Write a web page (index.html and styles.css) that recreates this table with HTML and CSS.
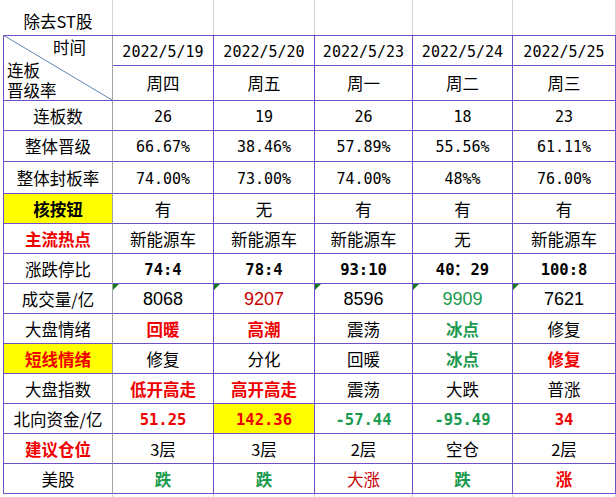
FILE: index.html
```html
<!DOCTYPE html>
<html lang="zh-CN">
<head>
<meta charset="utf-8">
<title>连板晋级率</title>
<link rel="stylesheet" href="styles.css">
</head>
<body>
<div class="sheet">
  <div class="toprow">
    <div class="tc cn">除去ST股</div><div class="tc"></div><div class="tc"></div><div class="tc"></div><div class="tc"></div><div class="tc"></div>
  </div>
  <div class="grid">
    <div class="c corner">
      <svg class="diag" viewBox="0 0 100 100" preserveAspectRatio="none"><line x1="0" y1="0" x2="100" y2="100" stroke="#5f82b2" stroke-width="1" vector-effect="non-scaling-stroke"/></svg>
      <span class="k-time">时间</span>
      <span class="k-l1">连板</span>
      <span class="k-l2">晋级率</span>
    </div>
    <div class="c num">2022/5/19</div><div class="c num">2022/5/20</div><div class="c num">2022/5/23</div><div class="c num">2022/5/24</div><div class="c num">2022/5/25</div>
    <div class="c cn">周四</div><div class="c cn">周五</div><div class="c cn">周一</div><div class="c cn">周二</div><div class="c cn">周三</div>

    <div class="c cn lab">连板数</div><div class="c num">26</div><div class="c num">19</div><div class="c num">26</div><div class="c num">18</div><div class="c num">23</div>
    <div class="c cn lab">整体晋级</div><div class="c num">66.67%</div><div class="c num">38.46%</div><div class="c num">57.89%</div><div class="c num">55.56%</div><div class="c num">61.11%</div>
    <div class="c cn lab">整体封板率</div><div class="c num">74.00%</div><div class="c num">73.00%</div><div class="c num">74.00%</div><div class="c num">48%%</div><div class="c num">76.00%</div>
    <div class="c cn lab b yel">核按钮</div><div class="c cn">有</div><div class="c cn">无</div><div class="c cn">有</div><div class="c cn">有</div><div class="c cn">有</div>
    <div class="c cn lab b red">主流热点</div><div class="c cn">新能源车</div><div class="c cn">新能源车</div><div class="c cn">新能源车</div><div class="c cn">无</div><div class="c cn">新能源车</div>
    <div class="c cn lab">涨跌停比</div><div class="c num b">74:4</div><div class="c num b">78:4</div><div class="c num b">93:10</div><div class="c num b">40：29</div><div class="c num b">100:8</div>
    <div class="c cn lab">成交量/亿</div><div class="c vol flag">8068</div><div class="c vol flag dred">9207</div><div class="c vol flag">8596</div><div class="c vol flag grn">9909</div><div class="c vol flag">7621</div>
    <div class="c cn lab">大盘情绪</div><div class="c cn b red">回暖</div><div class="c cn b red">高潮</div><div class="c cn">震荡</div><div class="c cn b grn">冰点</div><div class="c cn">修复</div>
    <div class="c cn lab b red yel">短线情绪</div><div class="c cn">修复</div><div class="c cn">分化</div><div class="c cn">回暖</div><div class="c cn b grn">冰点</div><div class="c cn b red">修复</div>
    <div class="c cn lab">大盘指数</div><div class="c cn b red">低开高走</div><div class="c cn b red">高开高走</div><div class="c cn">震荡</div><div class="c cn">大跌</div><div class="c cn">普涨</div>
    <div class="c cn lab">北向资金/亿</div><div class="c num b red">51.25</div><div class="c num b red yel">142.36</div><div class="c num b grn">-57.44</div><div class="c num b grn">-95.49</div><div class="c num b red">34</div>
    <div class="c cn lab b red">建议仓位</div><div class="c cn">3层</div><div class="c cn">3层</div><div class="c cn">2层</div><div class="c cn">空仓</div><div class="c cn">2层</div>
    <div class="c cn lab">美股</div><div class="c cn b grn">跌</div><div class="c cn b grn">跌</div><div class="c cn dred">大涨</div><div class="c cn b grn">跌</div><div class="c cn b red">涨</div>
  </div>
  <div class="bottomrow">
    <div class="tc"></div><div class="tc"></div><div class="tc"></div><div class="tc"></div><div class="tc"></div><div class="tc"></div>
  </div>
</div>
</body>
</html>
```
FILE: styles.css
```css
html, body {
  margin: 0;
  padding: 0;
  background: #ffffff;
}
body {
  width: 616px;
  height: 497px;
  overflow: hidden;
  color: #000000;
  font-family: "Noto Sans CJK SC", sans-serif;
}
.sheet {
  padding-left: 3px;
}
.toprow, .grid, .bottomrow {
  display: grid;
  grid-template-columns: 109px 101px 101px 98px 100px 103px;
}
.toprow {
  height: 35px;
  border-left: 1px solid transparent;
}
.bottomrow {
  height: 4px;
  border-left: 1px solid transparent;
}
.tc {
  box-sizing: border-box;
  border-right: 1px solid #d4d4d4;
  display: flex;
  align-items: center;
  justify-content: center;
  padding-top: 7px;
}
.toprow .tc:first-child {
  padding-top: 6px;
}
.grid {
  grid-template-rows: 30px 35px 30px 31px 32px repeat(10, 30px);
  border-left: 1px solid #7050c8;
  border-top: 1px solid #7050c8;
}
.c {
  box-sizing: border-box;
  border-right: 1px solid #7050c8;
  border-bottom: 1px solid #7050c8;
  display: flex;
  align-items: center;
  justify-content: center;
  position: relative;
  white-space: nowrap;
}
.lab, .corner {
  border-right-color: #a3a3a3;
}
.cn {
  font-family: "Noto Sans CJK SC", sans-serif;
  font-size: 16.5px;
  line-height: 20px;
}
.num {
  font-family: "DejaVu Sans Mono", "Liberation Mono", monospace;
  font-size: 15px;
  line-height: 18px;
  padding-top: 2px;
}
.num.b {
  font-size: 15.5px;
}
.vol {
  font-family: "Liberation Sans", Arial, sans-serif;
  font-size: 18px;
  line-height: 20px;
}
.b {
  font-weight: 700;
}
.red {
  color: #f00000;
}
.dred {
  color: #c80000;
}
.grn {
  color: #1a9a4e;
}
.yel {
  background: #ffff00;
}
.flag::before {
  content: "";
  position: absolute;
  left: 0;
  top: 0;
  border-top: 6px solid #18781e;
  border-right: 6px solid transparent;
}
.corner {
  grid-row: span 2;
  display: flex;
  flex-direction: column;
  align-items: flex-start;
  justify-content: flex-start;
  font-family: "Noto Sans CJK SC", sans-serif;
  font-size: 16.5px;
  padding-top: 2px;
}
.diag {
  position: absolute;
  left: -1px;
  top: -1px;
  width: calc(100% + 1px);
  height: calc(100% + 1px);
}
.k-time {
  line-height: 18px;
  padding-left: 49px;
}
.k-l1 {
  line-height: 19px;
  margin-top: 5px;
  padding-left: 3px;
}
.k-l2 {
  line-height: 19px;
  margin-top: 1px;
  padding-left: 3px;
}
```
